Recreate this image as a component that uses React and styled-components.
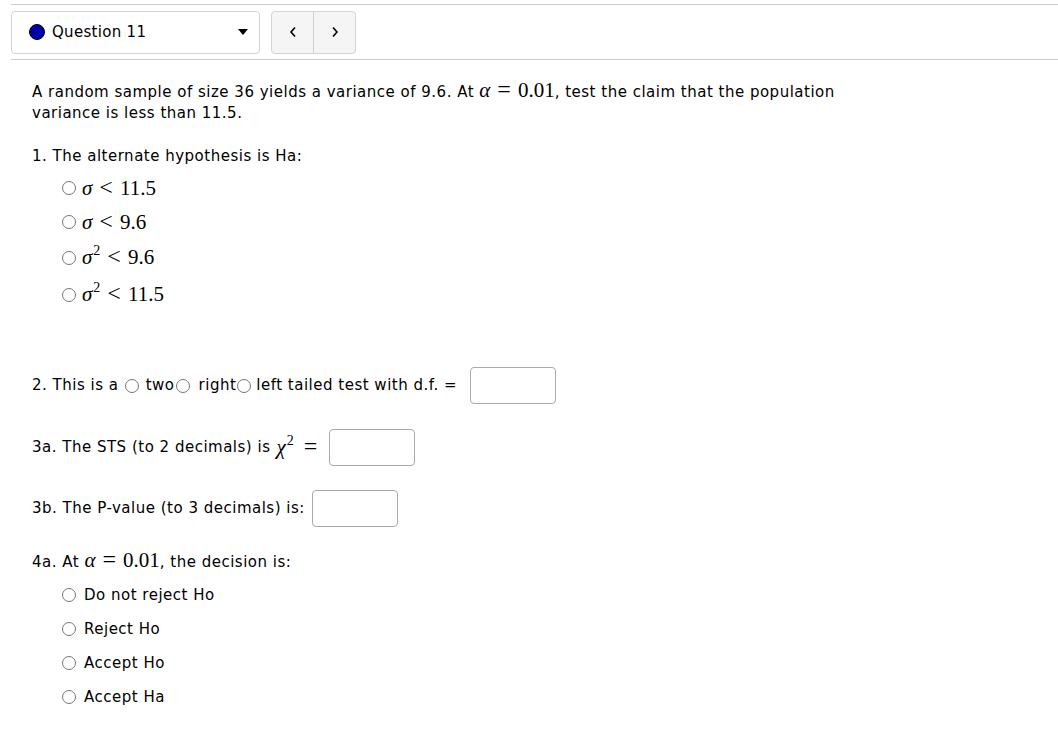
import React from 'react'
import styled, { createGlobalStyle } from 'styled-components'

const GlobalStyle = createGlobalStyle`
  body {
    margin: 0;
    background: #fff;
    font-family: "DejaVu Sans", "Open Sans", sans-serif;
    color: #000;
  }
`

const Page = styled.div`
  width: 1058px;
  padding-top: 4px;
`

const Toolbar = styled.div`
  margin-left: 11px;
  border-top: 1px solid #ccc;
  border-bottom: 1px solid #ccc;
  height: 54px;
  display: flex;
  align-items: center;
  gap: 11px;
`

const Select = styled.div`
  width: 249px;
  height: 43px;
  box-sizing: border-box;
  border: 1px solid #d4d4d4;
  border-radius: 4px;
  display: flex;
  align-items: center;
  padding: 0 11px 0 17px;
  font-size: 15px;
  letter-spacing: 0.3px;
`

const Dot = styled.span`
  width: 14px;
  height: 14px;
  border-radius: 50%;
  background: #0000a8;
  border: 1px solid #000;
  margin-right: 7px;
`

const Caret = styled.span`
  margin-left: auto;
  width: 0;
  height: 0;
  border-left: 5px solid transparent;
  border-right: 5px solid transparent;
  border-top: 6px solid #000;
`

const NavGroup = styled.div`
  display: flex;
  height: 43px;
  box-sizing: border-box;
  border: 1px solid #d4d4d4;
  border-radius: 4px;
  background: #f5f5f5;
  overflow: hidden;
`

const NavButton = styled.div`
  width: 41px;
  display: flex;
  align-items: center;
  justify-content: center;
  & + & {
    border-left: 1px solid #d0d0d0;
  }
`

const Body = styled.div`
  padding: 20px 0 0 32px;
  font-size: 15px;
  letter-spacing: 0.5px;
  line-height: 21px;
`

const Para = styled.p`
  margin: 0;
  width: 840px;
`

const Heading = styled.div`
  margin-top: ${p => p.top}px;
`

const Options = styled.div`
  display: flex;
  flex-direction: column;
  padding-left: 30px;
  gap: ${p => p.gap}px;
  margin-top: ${p => p.top}px;
`

const Option = styled.label`
  display: flex;
  align-items: center;
  height: ${p => p.h || 20}px;
`

const Radio = styled.span`
  display: inline-block;
  width: 12px;
  height: 12px;
  border: 1px solid #767676;
  border-radius: 50%;
  margin-right: ${p => p.gap ?? 8}px;
  margin-left: ${p => p.left ?? 0}px;
  flex-shrink: 0;
`

const Math = styled.span`
  font-family: "Liberation Serif", "DejaVu Serif", serif;
  font-size: 21px;
  letter-spacing: 0;
  margin-left: ${p => p.left || 0}px;
`

const Var = styled.i`
  font-family: "Liberation Serif", serif;
`

const Row = styled.div`
  display: flex;
  align-items: center;
  white-space: pre;
  margin-top: ${p => p.top}px;
`

const Box = styled.span`
  display: inline-block;
  width: 86px;
  height: 37px;
  box-sizing: border-box;
  border: 1px solid #aaa;
  border-radius: 4px;
  margin-left: ${p => p.left}px;
`

const Sup = styled.sup`
  font-size: 14px;
  vertical-align: 9px;
  line-height: 0;
  margin-left: 1px;
`

const Op = styled.span`
  font-size: 24px;
  line-height: 0;
  margin: 0 ${p => p.m ?? 7}px;
`

const Chevron = ({ dir }) => (
  <svg width="8" height="12" viewBox="0 0 8 12">
    <path
      d={dir === 'left' ? 'M6 1.5 L2 6 L6 10.5' : 'M2 1.5 L6 6 L2 10.5'}
      fill="none"
      stroke="#000"
      strokeWidth="1.6"
    />
  </svg>
)

const Alpha = () => (
  <Math>
    <Var>α</Var>
    <Op>=</Op>0.01
  </Math>
)

const hyps = [
  { sq: false, v: '11.5' },
  { sq: false, v: '9.6' },
  { sq: true, v: '9.6' },
  { sq: true, v: '11.5' }
]

const decisions = ['Do not reject Ho', 'Reject Ho', 'Accept Ho', 'Accept Ha']

const App = () => (
  <Page>
    <GlobalStyle />
    <Toolbar>
      <Select>
        <Dot />
        Question 11
        <Caret />
      </Select>
      <NavGroup>
        <NavButton>
          <Chevron dir="left" />
        </NavButton>
        <NavButton>
          <Chevron dir="right" />
        </NavButton>
      </NavGroup>
    </Toolbar>
    <Body>
      <Para>
        A random sample of size 36 yields a variance of 9.6. At <Alpha />, test the claim that the population
        variance is less than 11.5.
      </Para>
      <Heading top={22}>1. The alternate hypothesis is Ha:</Heading>
      <Options gap={14} top={11}>
        {hyps.map((h, i) => (
          <Option key={i} h={h.sq ? 23 : 20}>
            <Radio gap={6} />
            <Math>
              <Var>σ</Var>
              {h.sq && <Sup>2</Sup>}
              <Op>&lt;</Op>
              {h.v}
            </Math>
          </Option>
        ))}
      </Options>
      <Row top={61}>
        {'2. This is a '}
        <Radio left={1} gap={7} />
        two
        <Radio left={1} gap={9} />
        right
        <Radio left={1} gap={5} />
        {'left tailed test with d.f. ='}
        <Box left={13} />
      </Row>
      <Row top={25}>
        3a. The STS (to 2 decimals) is
        <Math left={6}>
          <Var>χ</Var>
          <Sup>2</Sup>
          <Op m={10}>=</Op>
        </Math>
        <Box left={2} />
      </Row>
      <Row top={24}>
        {'3b. The P-value (to 3 decimals) is: '}
        <Box left={2} />
      </Row>
      <Heading top={23}>
        4a. At <Alpha />, the decision is:
      </Heading>
      <Options gap={14} top={12}>
        {decisions.map(d => (
          <Option key={d}>
            <Radio />
            {d}
          </Option>
        ))}
      </Options>
    </Body>
  </Page>
)

export default App
